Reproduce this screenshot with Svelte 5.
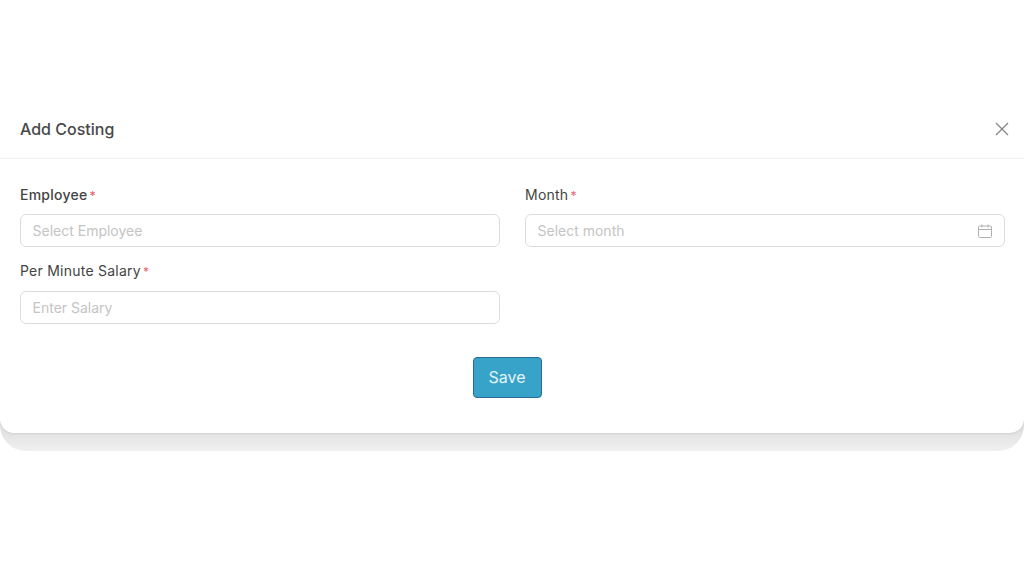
<script>
  let employee = $state('');
  let month = $state('');
  let salary = $state('');
</script>

<div class="page">
  <div class="modal">
    <header class="modal-header">
      <h2>Add Costing</h2>
      <button type="button" class="close" aria-label="Close">
        <svg width="14" height="14" viewBox="0 0 14 14" fill="none" stroke="currentColor" stroke-width="1.3">
          <path d="M1 1l12 12M13 1L1 13" />
        </svg>
      </button>
    </header>

    <form class="modal-body">
      <div class="fields">
        <div class="field">
          <label for="employee" class="strong">Employee<span class="req">*</span></label>
          <input id="employee" type="text" placeholder="Select Employee" bind:value={employee} />
        </div>
        <div class="field">
          <label for="month">Month<span class="req">*</span></label>
          <div class="input-wrapper">
            <input id="month" type="text" placeholder="Select month" bind:value={month} />
            <svg class="calendar" width="14" height="14" viewBox="0 0 14 14" fill="none" stroke="currentColor" stroke-width="1">
              <rect x="0.5" y="2" width="13" height="11.5" rx="1" />
              <path d="M0.5 5.5h13M4 0.5v3M10 0.5v3" />
            </svg>
          </div>
        </div>
        <div class="field second-row">
          <label for="salary">Per Minute Salary<span class="req">*</span></label>
          <input id="salary" type="text" placeholder="Enter Salary" bind:value={salary} />
        </div>
      </div>

      <div class="actions">
        <button type="button" class="save">Save</button>
      </div>
    </form>
  </div>
</div>

<style>
  :global(body) {
    background: #fff;
    font-family: Inter, "Liberation Sans", sans-serif;
  }

  .page {
    height: 585px;
    padding-top: 100px;
    box-sizing: border-box;
    overflow: hidden;
  }

  .modal {
    position: relative;
    z-index: 0;
    height: 333px;
  }

  /* white sheet, sits above the grey band */
  .modal::before {
    content: '';
    position: absolute;
    inset: 0;
    z-index: -1;
    background: #fff;
    border-radius: 0 0 14px 14px;
    box-shadow: 0 1px 2px rgba(0, 0, 0, 0.08);
  }

  /* grey band showing under the dialog */
  .modal::after {
    content: '';
    position: absolute;
    left: 0;
    right: 0;
    bottom: -18px;
    height: 50px;
    border-radius: 0 0 26px 26px;
    background: linear-gradient(#dadada 40%, #f0f0f0);
    z-index: -2;
  }

  .modal-header {
    display: flex;
    align-items: center;
    justify-content: space-between;
    height: 58px;
    padding: 0 15px 0 20px;
    border-bottom: 1px solid #f2f2f2;
  }

  h2 {
    margin: 0;
    font-size: 16px;
    font-weight: 500;
    color: #484848;
  }

  .close {
    display: flex;
    padding: 0;
    border: none;
    background: none;
    color: #858585;
  }

  .modal-body {
    padding: 26px 20px 0;
  }

  .fields {
    display: grid;
    grid-template-columns: 480px 480px;
    column-gap: 25px;
    row-gap: 14px;
  }

  .field {
    display: flex;
    flex-direction: column;
    gap: 10px;
  }

  .field.second-row {
    gap: 11px;
  }

  label {
    display: block;
    height: 19px;
    font-size: 14px;
    line-height: 19px;
    letter-spacing: 0.24px;
    color: #444;
  }

  label.strong {
    font-weight: 500;
  }

  .req {
    margin-left: 2px;
    font-size: 12px;
    line-height: 1;
    color: #e8636a;
  }

  input {
    width: 100%;
    height: 33px;
    padding: 0 12px 0 11.5px;
    box-sizing: border-box;
    border: 1px solid #dcdcdc;
    border-radius: 6px;
    background: #fff;
    font-size: 14px;
    font-family: inherit;
    color: #333;
  }

  input::placeholder {
    color: #c4c4c4;
    opacity: 1;
  }

  .input-wrapper {
    position: relative;
    display: flex;
    align-items: center;
  }

  .calendar {
    position: absolute;
    right: 13px;
    color: #b0b0b0;
  }

  .actions {
    display: flex;
    justify-content: center;
    padding: 33px 10px 0 0;
  }

  .save {
    width: 69px;
    height: 41px;
    padding: 0 0 2px;
    border: 1px solid #2a6a94;
    border-radius: 4px;
    background: #38a3c9;
    color: #e4f4fa;
    font-size: 16px;
    font-family: inherit;
  }
</style>
